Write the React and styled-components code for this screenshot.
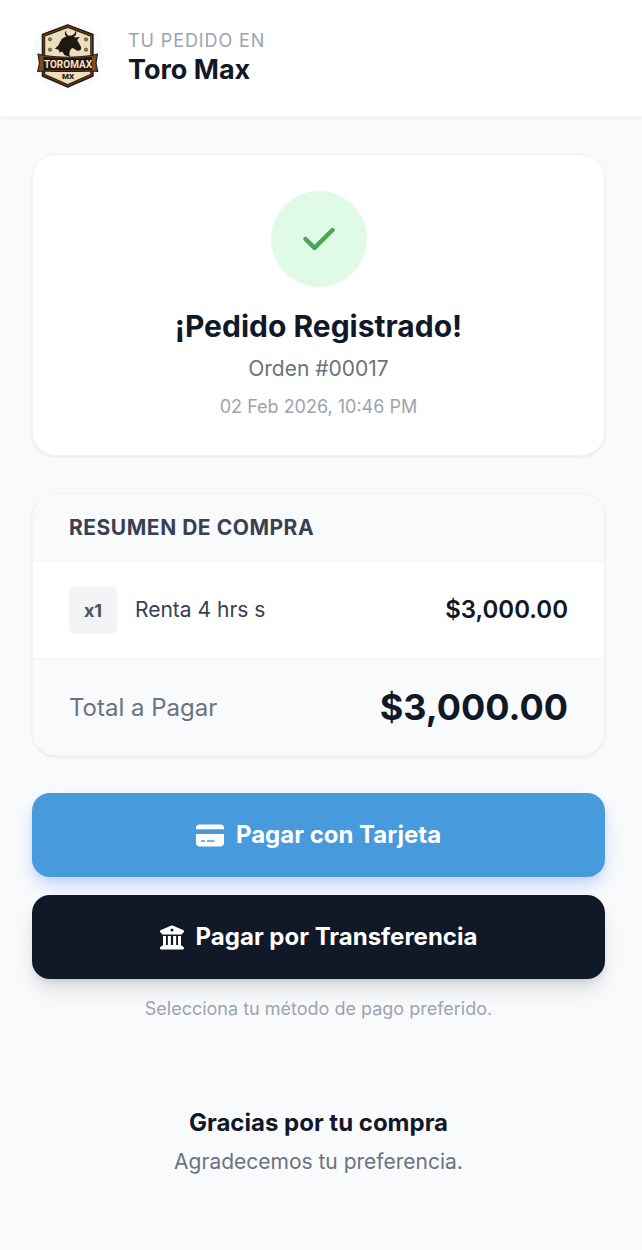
import React from 'react'
import styled, { createGlobalStyle } from 'styled-components'
import { FaCheck, FaCreditCard, FaBuildingColumns } from 'react-icons/fa6'

const order = {
  store: 'Toro Max',
  number: '00017',
  date: '02 Feb 2026, 10:46 PM',
  items: [{ id: 1, qty: 1, name: 'Renta 4 hrs s', price: '$3,000.00' }],
  total: '$3,000.00'
}

function Logo() {
  return (
    <LogoCircle viewBox="0 0 72 72" role="img" aria-label="Toromax MX">
      <polygon points="35.7,4.8 61,14.5 61,56 35.7,67.2 10.4,56 10.4,14.5" fill="#2a1c10" stroke="#2a1c10" strokeWidth="1.4" strokeLinejoin="round" />
      <polygon points="35.7,6.2 59.6,15.4 59.6,55 35.7,65.7 11.8,55 11.8,15.4" fill="none" stroke="#7d4a22" strokeWidth="0.9" />
      <polygon points="35.7,8 58.2,16.6 58.2,54 35.7,64 13.2,54 13.2,16.6" fill="#ecdfbf" />
      <g fill="#8d8674" stroke="#4c4536" strokeWidth="0.8">
        <circle cx="18" cy="19.3" r="1.6" />
        <circle cx="54" cy="19.3" r="1.6" />
        <circle cx="18" cy="29.7" r="1.6" />
        <circle cx="54" cy="29.7" r="1.6" />
      </g>
      <path d="M34.4 10.6 C32.4 12.6 32.2 15 34.4 16.8 C31.4 17.2 29.4 18.8 28.4 21.4 L26.4 25.2 L23 28.8 L26.6 29.8 L27.6 32.4 L30.2 31.6 L32.4 35 L38 37 C36.8 33.4 37.4 30.4 40 28 C42.6 28.4 44 31 46.8 30.8 L49 29.6 L49 27 L46.6 22.4 L45.2 20 L47.8 17 L43.4 17.6 L41.6 16.6 C44.6 15.2 45 12.8 43.4 10.4 C43.4 13 42 14.6 39.4 15.4 L36.6 15.8 C34.4 14.8 33.8 13 34.4 10.6 Z" fill="#1f1710" />
      <path d="M6 34 L12 35.5 Q35.7 39 59.4 35.5 L65.5 34 L64 43 L65.7 51.5 L59.4 51 Q35.7 52 12 51 L5.7 51.5 L7.5 43 Z" fill="#7d4a22" stroke="#2a1c10" strokeWidth="1.2" strokeLinejoin="round" />
      <path d="M11.5 36.8 Q35.7 39.5 60 36.8 L60 50.2 Q35.7 51 11.5 50.2 Z" fill="#24180e" />
      <text x="36" y="48" textAnchor="middle" fontFamily="Roboto, sans-serif" fontSize="10" fontWeight="700" fill="#f0e4c6">TOROMAX</text>
      <text x="36" y="59" textAnchor="middle" fontFamily="Roboto, sans-serif" fontSize="8" fontWeight="900" fill="#2a1c10">MX</text>
    </LogoCircle>
  )
}

function App() {
  return (
    <>
      <GlobalStyle />
      <Header>
        <Logo />
        <div>
          <StoreLabel>Tu pedido en</StoreLabel>
          <StoreName>{order.store}</StoreName>
        </div>
      </Header>

      <Main>
        <StatusCard>
          <CheckCircle>
            <FaCheck />
          </CheckCircle>
          <StatusTitle>¡Pedido Registrado!</StatusTitle>
          <OrderNumber>Orden #{order.number}</OrderNumber>
          <OrderDate>{order.date}</OrderDate>
        </StatusCard>

        <Card>
          <SummaryTitle>Resumen de compra</SummaryTitle>
          <ItemList>
            {order.items.map(item => (
              <Item key={item.id}>
                <Quantity>x{item.qty}</Quantity>
                <ItemName>{item.name}</ItemName>
                <ItemPrice>{item.price}</ItemPrice>
              </Item>
            ))}
          </ItemList>
          <TotalRow>
            <span>Total a Pagar</span>
            <TotalPrice>{order.total}</TotalPrice>
          </TotalRow>
        </Card>

        <Actions>
          <PayButton type="button" $primary>
            <FaCreditCard />
            Pagar con Tarjeta
          </PayButton>
          <PayButton type="button">
            <FaBuildingColumns />
            Pagar por Transferencia
          </PayButton>
          <Hint>Selecciona tu método de pago preferido.</Hint>
        </Actions>
      </Main>

      <Footer>
        <Thanks>Gracias por tu compra</Thanks>
        <FooterText>Agradecemos tu preferencia.</FooterText>
      </Footer>
    </>
  )
}

const GlobalStyle = createGlobalStyle`
  * {
    box-sizing: border-box;
  }
  body {
    margin: 0;
    background: #f9fafc;
    color: #111827;
    font-family: Inter, sans-serif;
    -webkit-font-smoothing: antialiased;
  }
  h1, h2, h3, p, ul {
    margin: 0;
    padding: 0;
  }
`

const Header = styled.header`
  display: flex;
  align-items: center;
  gap: 24px;
  padding: 20px 32px 24px;
  background: #fff;
  border-bottom: 2px solid #f3f4f6;
  box-shadow: 0 1px 3px rgba(0, 0, 0, 0.05);
`

const LogoCircle = styled.svg`
  flex: none;
  width: 72px;
  height: 72px;
  border-radius: 50%;
  background: #f9fafc;
`

const StoreLabel = styled.p`
  color: #9ca3af;
  font-size: 18px;
  line-height: 28px;
  letter-spacing: 0.05em;
  text-transform: uppercase;
`

const StoreName = styled.h1`
  font-size: 27px;
  font-weight: 700;
  line-height: 30px;
`

const Main = styled.main`
  display: flex;
  flex-direction: column;
  gap: 37px;
  padding: 36px 37px 0 32px;
`

const Card = styled.section`
  overflow: hidden;
  background: #fff;
  border: 1px solid #f3f4f6;
  border-radius: 24px;
  box-shadow: 0 1px 3px rgba(0, 0, 0, 0.08);
`

const StatusCard = styled(Card)`
  display: flex;
  flex-direction: column;
  align-items: center;
  padding: 36px;
  text-align: center;
`

const CheckCircle = styled.div`
  display: flex;
  align-items: center;
  justify-content: center;
  width: 96px;
  height: 96px;
  margin-bottom: 18px;
  border-radius: 50%;
  background: #e0fae8;
  color: #4ba553;
  font-size: 36px;
`

const StatusTitle = styled.h2`
  font-size: 30px;
  font-weight: 700;
  line-height: 42px;
`

const OrderNumber = styled.p`
  margin-top: 6px;
  color: #6b7280;
  font-size: 21px;
  line-height: 32px;
`

const OrderDate = styled.p`
  margin-top: 10px;
  color: #9ca3af;
  font-size: 18px;
  line-height: 24px;
`

const SummaryTitle = styled.h3`
  padding: 18px 36px;
  background: #f9fafc;
  border-bottom: 1px solid #f3f4f6;
  color: #374151;
  font-size: 21px;
  font-weight: 700;
  line-height: 31px;
  letter-spacing: 0.025em;
  text-transform: uppercase;
`

const ItemList = styled.ul`
  list-style: none;
`

const Item = styled.li`
  display: flex;
  align-items: center;
  gap: 18px;
  padding: 24px 36px;
`

const Quantity = styled.span`
  display: flex;
  align-items: center;
  justify-content: center;
  width: 48px;
  height: 48px;
  border-radius: 6px;
  background: #f3f4f6;
  color: #4b5563;
  font-size: 18px;
  font-weight: 700;
`

const ItemName = styled.span`
  flex: 1;
  color: #374151;
  font-size: 21px;
  line-height: 32px;
`

const ItemPrice = styled.span`
  font-size: 24px;
  font-weight: 600;
  line-height: 36px;
`

const TotalRow = styled.div`
  display: flex;
  align-items: center;
  justify-content: space-between;
  padding: 24px 36px;
  background: #f9fafc;
  border-top: 1px solid #f3f4f6;
  color: #6b7280;
  font-size: 24px;
`

const TotalPrice = styled.strong`
  color: #111827;
  font-size: 36px;
  font-weight: 700;
  line-height: 48px;
`

const Actions = styled.div`
  display: flex;
  flex-direction: column;
  gap: 18px;
`

const PayButton = styled.button`
  display: flex;
  align-items: center;
  justify-content: center;
  gap: 12px;
  padding: 24px;
  border: 0;
  border-radius: 18px;
  background: ${props => (props.$primary ? '#479bdd' : '#111827')};
  box-shadow: ${props =>
    props.$primary
      ? '0 10px 20px -3px #c3d3f8, 0 4px 8px -3px #c3d3f8'
      : '0 12px 22px -4px rgba(0, 0, 0, 0.14), 0 5px 9px -4px rgba(0, 0, 0, 0.14)'};
  color: #fff;
  font-family: inherit;
  font-size: 24px;
  font-weight: 700;
  line-height: 36px;
  cursor: pointer;

  svg {
    width: ${props => (props.$primary ? '28px' : '24px')};
    height: 25px;
  }
`

const Hint = styled.p`
  color: #9ca3af;
  font-size: 18px;
  line-height: 24px;
  text-align: center;
`

const Footer = styled.footer`
  padding: 84px 37px 72px 32px;
  text-align: center;
`

const Thanks = styled.p`
  font-size: 24px;
  font-weight: 700;
  line-height: 36px;
`

const FooterText = styled.p`
  margin-top: 6px;
  color: #6b7280;
  font-size: 21px;
  line-height: 30px;
`

export default App
